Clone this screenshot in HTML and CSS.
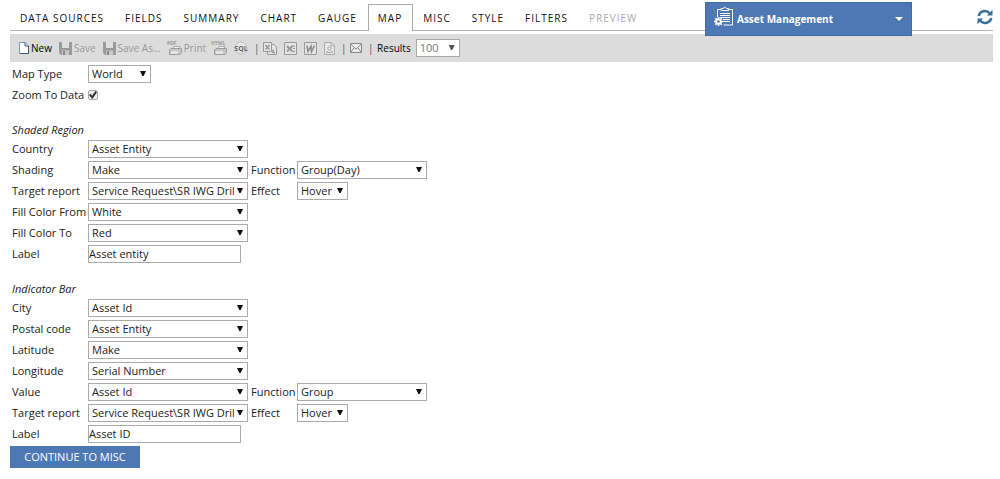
FILE: index.html
```html
<!DOCTYPE html>
<html lang="en">
<head>
<meta charset="utf-8">
<title>Report Designer</title>
<link rel="stylesheet" href="styles.css">
</head>
<body>
<header class="top">
  <nav class="tabs">
    <a class="tab" href="#data">DATA SOURCES</a>
    <a class="tab" href="#fields">FIELDS</a>
    <a class="tab" href="#summary">SUMMARY</a>
    <a class="tab" href="#chart">CHART</a>
    <a class="tab" href="#gauge">GAUGE</a>
    <a class="tab active" href="#map">MAP</a>
    <a class="tab" href="#misc">MISC</a>
    <a class="tab" href="#style">STYLE</a>
    <a class="tab" href="#filters">FILTERS</a>
    <a class="tab disabled" href="#preview">PREVIEW</a>
  </nav>
  <button class="module" type="button">
    <svg width="20" height="20" viewBox="0 0 20 20" fill="none" stroke="#fff">
      <path d="M3.500 11V3.500H7M14 3.500H18.500V19H9.500"/>
      <path d="M7 4.500V2.500H9Q10.700 -.5 12.500 2.500H14.500V4.500Z"/>
      <path d="M6 7.500H16M6 9.500H16M6 11.500H16M9 13.500H16M9 15.500H16"/>
      <circle cx="4.500" cy="15.500" r="2.300" stroke-width="2"/>
      <path d="M4.500 11V13M4.500 18V20M0 15.500H2M7 15.500H9M1.300 12.300 2.700 13.700M6.300 17.300 7.700 18.700M7.700 12.300 6.300 13.700M2.700 17.300 1.300 18.700" stroke-width="1.600"/>
    </svg>
    <span>Asset Management</span>
    <i class="caret"></i>
  </button>
  <button class="refresh" type="button" aria-label="Refresh">
    <svg width="16" height="16" viewBox="0 0 16 16" fill="none" stroke="#386f9b" stroke-width="2.400">
      <path d="M1.700 7A6.300 6 0 0 1 12.700 4.200M14.300 9A6.300 6 0 0 1 3.300 11.800"/>
      <path d="M15.500 .8V6.500H9.800ZM.5 15.200V9.500H6.200Z" fill="#386f9b" stroke="none"/>
    </svg>
  </button>
</header>

<div class="toolbar">
  <button class="tool new" type="button">
    <svg width="10" height="12" viewBox="0 0 10 12"><path d="M.5 .5H6L9.500 4V11.500H.5Z" fill="#fff" stroke="#7d9cc0"/><path d="M6 .5V4H9.500V11.500H1" fill="none" stroke="#34577f"/></svg>
    <span>New</span>
  </button>
  <button class="tool" type="button" disabled>
    <svg width="13" height="13" viewBox="0 0 13 13"><path d="M0 0H13V13H2L0 11Z" fill="#9b9b9b"/><path d="M3 0H10V6H3Z" fill="#dedede"/><path d="M3 8.500H10V13H3Z" fill="#c9c9c9"/><path d="M4 9H6V13H4Z" fill="#888"/></svg>
    <span>Save</span>
  </button>
  <button class="tool" type="button" disabled>
    <svg width="13" height="13" viewBox="0 0 13 13"><path d="M0 0H13V13H2L0 11Z" fill="#9b9b9b"/><path d="M3 0H10V6H3Z" fill="#dedede"/><path d="M3 8.500H10V13H3Z" fill="#c9c9c9"/><path d="M4 9H6V13H4Z" fill="#888"/></svg>
    <span>Save As...</span>
  </button>
  <button class="tool" type="button" disabled>
    <svg class="printer" width="14" height="14" viewBox="0 0 14 14"><path d="M5 8 6 5.500H12L11 8Z" fill="#f0f0f0" stroke="#aaa"/><path d="M1.500 9 3 7.500H13.500V11.500L12 13.500H1.500Z" fill="#c6c6c6" stroke="#9d9d9d"/><path d="M3 10.500H10V12.500H3Z" fill="#f0f0f0"/><text x="-1" y="4">PDF</text></svg>
    <span>Print</span>
  </button>
  <button class="tool" type="button" disabled aria-label="Print HTML">
    <svg class="printer" width="14" height="14" viewBox="0 0 14 14"><path d="M5 8 6 5.500H12L11 8Z" fill="#f0f0f0" stroke="#aaa"/><path d="M1.500 9 3 7.500H13.500V11.500L12 13.500H1.500Z" fill="#c6c6c6" stroke="#9d9d9d"/><path d="M3 10.500H10V12.500H3Z" fill="#f0f0f0"/><text x="-2" y="4">HTML</text></svg>
  </button>
  <button class="tool sql" type="button" disabled aria-label="SQL">
    <svg width="14" height="14" viewBox="0 0 14 14"><circle cx="7" cy="7" r="6" fill="#e8e8e8" stroke="#bdbdbd"/><text x="7" y="10" text-anchor="middle">SQL</text></svg>
  </button>
  <span class="bar">|</span>
  <button class="tool" type="button" disabled aria-label="Export CSV">
    <svg width="14" height="13" viewBox="0 0 14 13" fill="#e4e4e4" stroke="#999"><path d="M4.500 2.500H11L13.500 5V12.500H4.500Z"/><path d="M.5 .5H8.500V9.500H.5Z"/><path d="M2.500 3 6.500 7.500M6.500 3 2.500 7.500M9 8.500H11M9 10.500H12" stroke-width="1.500"/></svg>
  </button>
  <button class="tool" type="button" disabled aria-label="Export Excel">
    <svg width="13" height="13" viewBox="0 0 13 13" fill="#e4e4e4" stroke="#999"><path d="M.5 .5H12.500V12.500H.5Z"/><path d="M3 4 8.500 9.500M8.500 4 3 9.500" stroke-width="2"/><path d="M8 4H11M9 6.500H11M8 9.500H11"/></svg>
  </button>
  <button class="tool" type="button" disabled aria-label="Export Word">
    <svg width="13" height="13" viewBox="0 0 13 13" fill="#e4e4e4" stroke="#999"><path d="M.5 .5H12.500V12.500H.5Z"/><path d="M3 3.500 4 9.500 7 4 7.500 9.500 10.500 3.500" fill="none" stroke="#888" stroke-width="1.500"/></svg>
  </button>
  <button class="tool" type="button" disabled aria-label="Export XML">
    <svg width="11" height="13" viewBox="0 0 11 13" fill="#e6e6e6" stroke="#aaa"><path d="M.5 .5H7.500L10.500 3.500V12.500H.5Z"/><path d="M7 1V4H10"/><circle cx="5.500" cy="6.500" r="1.700"/><path d="M2.500 10.500H8.500M3.500 9 2.500 10.500M7.500 9 8.500 10.500"/></svg>
  </button>
  <span class="bar">|</span>
  <button class="tool" type="button" disabled aria-label="Email">
    <svg width="12" height="10" viewBox="0 0 12 10" fill="#ececec" stroke="#888"><path d="M.5 .5H11.500V9.500H.5Z"/><path d="M.5 1 6 6 11.500 1M.5 9.500 4 5M11.500 9.500 8 5" fill="none"/></svg>
  </button>
  <span class="bar">|</span>
  <label class="results" for="results">Results</label>
  <span class="pick count"><select id="results"><option>100</option></select></span>
</div>

<main class="form">
  <div class="row"><label for="type">Map Type</label><span class="pick medium"><select id="type"><option>World</option></select></span></div>
  <div class="row"><label for="zoom">Zoom To Data</label><input class="check" id="zoom" type="checkbox" checked></div>

  <h2>Shaded Region</h2>
  <div class="row"><label for="country">Country</label><span class="pick"><select id="country"><option>Asset Entity</option></select></span></div>
  <div class="row"><label for="shading">Shading</label><span class="pick"><select id="shading"><option>Make</option></select></span>
    <label class="second" for="fn1">Function</label><span class="pick wide"><select id="fn1"><option>Group(Day)</option></select></span></div>
  <div class="row"><label for="target1">Target report</label><span class="pick"><select id="target1"><option>Service Request\SR IWG Drilldown</option></select></span>
    <label class="second" for="fx1">Effect</label><span class="pick small"><select id="fx1"><option>Hover</option></select></span></div>
  <div class="row"><label for="from">Fill Color From</label><span class="pick"><select id="from"><option>White</option></select></span></div>
  <div class="row"><label for="to">Fill Color To</label><span class="pick"><select id="to"><option>Red</option></select></span></div>
  <div class="row"><label for="label1">Label</label><input class="text" id="label1" type="text" value="Asset entity"></div>

  <h2>Indicator Bar</h2>
  <div class="row"><label for="city">City</label><span class="pick"><select id="city"><option>Asset Id</option></select></span></div>
  <div class="row"><label for="postal">Postal code</label><span class="pick"><select id="postal"><option>Asset Entity</option></select></span></div>
  <div class="row"><label for="lat">Latitude</label><span class="pick"><select id="lat"><option>Make</option></select></span></div>
  <div class="row"><label for="long">Longitude</label><span class="pick"><select id="long"><option>Serial Number</option></select></span></div>
  <div class="row"><label for="value">Value</label><span class="pick"><select id="value"><option>Asset Id</option></select></span>
    <label class="second" for="fn2">Function</label><span class="pick wide"><select id="fn2"><option>Group</option></select></span></div>
  <div class="row"><label for="target2">Target report</label><span class="pick"><select id="target2"><option>Service Request\SR IWG Drilldown</option></select></span>
    <label class="second" for="fx2">Effect</label><span class="pick small"><select id="fx2"><option>Hover</option></select></span></div>
  <div class="row"><label for="label2">Label</label><input class="text" id="label2" type="text" value="Asset ID"></div>
</main>
<button class="continue" type="button">CONTINUE TO MISC</button>
</body>
</html>
```
FILE: styles.css
```css
* { box-sizing: border-box; }
body {
  margin: 0;
  padding: 4px 7px 11px 10px;
  background: #fff;
  color: #222;
  font: 11px/16px "Open Sans", "Noto Sans", sans-serif;
}
button, select, input { font: inherit; color: inherit; margin: 0; }
button { border: 0; padding: 0; background: none; }
svg { display: block; flex: none; }

.top {
  position: relative;
  border-bottom: 1px solid #b4b4b4;
}
.tabs { display: flex; height: 26px; }
.tab {
  height: 27px;
  padding: 5px 10px 0 9px;
  border: 1px solid transparent;
  border-bottom: 0;
  color: #111;
  font-size: 10px;
  letter-spacing: 1px;
  text-decoration: none;
  white-space: nowrap;
}
.tab.active { background: #fff; border-color: #aaa; }
.tab.disabled { color: #aaa; }
.module {
  position: absolute;
  top: -2px;
  right: 81px;
  display: flex;
  align-items: center;
  gap: 3px;
  width: 207px;
  height: 34px;
  padding: 0 8px;
  border: 1px solid #4069a6;
  background: #4d78b4;
  color: #fff;
  font-size: 10px;
  font-weight: 700;
  z-index: 1;
}
.module svg { margin-bottom: 6px; }
.caret {
  width: 8px;
  height: 4px;
  margin-left: auto;
  background: #fff;
  clip-path: polygon(0 0, 100% 0, 50% 100%);
}
.refresh { position: absolute; top: 5px; right: 0; }

.toolbar {
  display: flex;
  align-items: center;
  height: 28px;
  margin-top: 3px;
  padding-left: 9px;
  gap: 7px;
  background: #dcdcdc;
  font-size: 10px;
}
.tool { display: flex; align-items: center; gap: 2px; color: #999; }
.tool.new { color: #000; }
.bar { width: 3px; margin: 0 -1px; text-align: center; color: #555; }
.printer { overflow: visible; }
.printer text { font: bold 5px "Open Sans", sans-serif; fill: #999; }
.sql text { font: bold 7px "Open Sans", sans-serif; fill: #666; }
.results { color: #000; }

.form { display: grid; gap: 3px; padding: 3px 0 3px 2px; }
.form h2 {
  margin: 16px 0 0;
  font-size: 11px;
  line-height: 14px;
  font-weight: 400;
  font-style: italic;
}
.row { display: flex; align-items: center; height: 18px; }
.row label { width: 76px; white-space: nowrap; }
.row .second { width: 46px; margin-left: 3px; }
.pick { position: relative; display: block; width: 160px; height: 18px; font-size: 11px; }
.pick.medium { width: 63px; }
.pick.wide { width: 130px; }
.pick.small { width: 51px; }
.pick.count { width: 44px; color: #777; }
.toolbar .results { margin-right: -2px; }
.pick select {
  display: block;
  width: 100%;
  height: 18px;
  padding: 0 13px 0 3px;
  border: 1px solid #aaa;
  border-radius: 0;
  background: #fff;
  appearance: none;
}
.pick::after {
  content: "";
  position: absolute;
  top: 6px;
  right: 5px;
  width: 6px;
  height: 5px;
  background: #111;
  clip-path: polygon(0 0, 100% 0, 60% 100%, 40% 100%);
  pointer-events: none;
}
.pick.count::after { background: #555; }
.text {
  width: 153px;
  height: 18px;
  padding: 0 0 1px;
  border: 1px solid #aaa;
}
.check {
  display: grid;
  width: 10px;
  height: 10px;
  border: 1px solid #aaa;
  border-radius: 2px;
  background: #eee;
  appearance: none;
}
.check:checked::after {
  content: "";
  width: 8px;
  height: 8px;
  background: #333;
  clip-path: polygon(0 50%, 20% 35%, 38% 58%, 80% 0, 100% 15%, 42% 100%);
}
.continue {
  min-width: 130px;
  height: 22px;
  background: #4d78b4;
  color: #fff;
}
```
